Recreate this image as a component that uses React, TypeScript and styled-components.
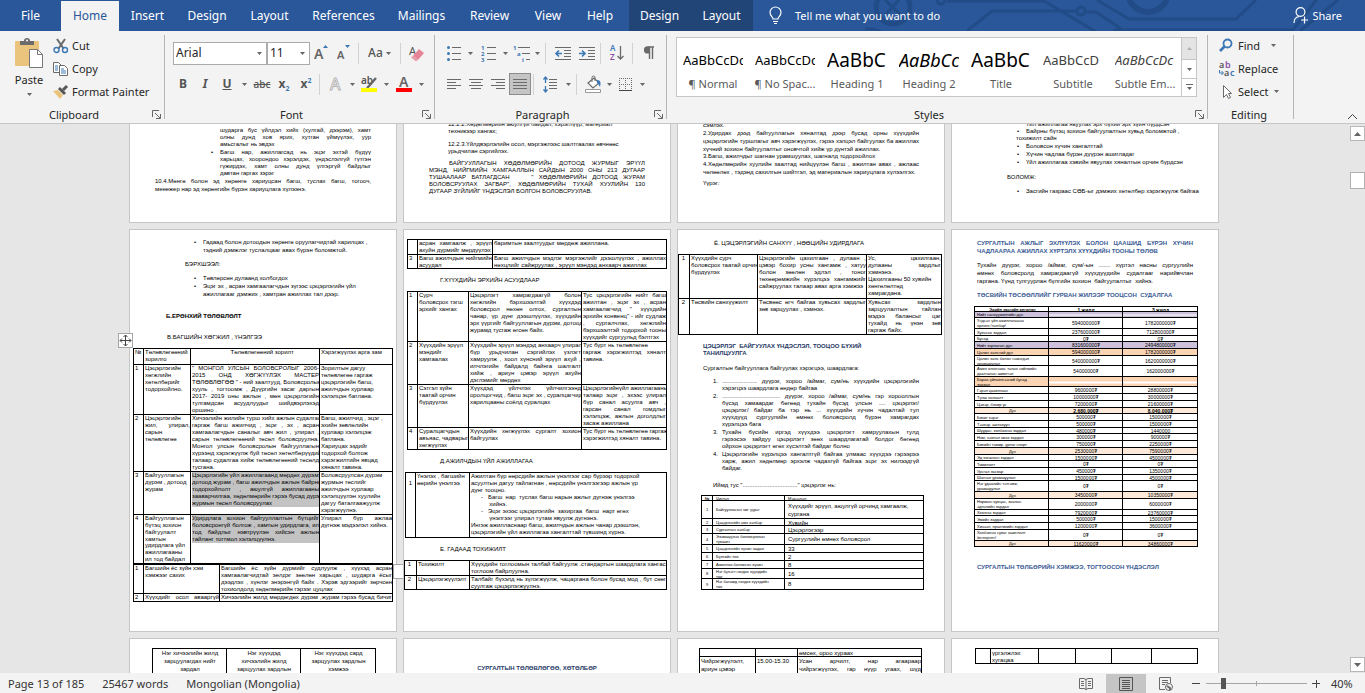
import React from 'react';
import styled, { createGlobalStyle, css } from 'styled-components';

const Global = createGlobalStyle`
  *, *::before, *::after { box-sizing: border-box; }
  body { margin: 0; overflow: hidden; }
  button, select, input { font: inherit; color: inherit; }
  button { border: 0; background: none; padding: 0; }
`;

/* ---------- shell ---------- */

const Shell = styled.div`
  display: flex;
  flex-direction: column;
  height: 100vh;
  background: #e6e6e6;
  color: #262626;
  font: 11px/16px "Noto Sans", "Open Sans", sans-serif;
`;

const TabBar = styled.nav`
  position: relative;
  display: flex;
  flex: none;
  align-items: stretch;
  height: 31px;
  background: #2a579a;
  color: #fff;
`;

const Circuit = styled.svg`
  position: absolute;
  top: 0;
  right: 0;
  width: 500px;
  height: 31px;
`;

const Tab = styled.button<{ $w: number; $active?: boolean }>`
  width: ${p => p.$w}px;
  font-size: 12px;
  ${p => p.$active && css`
    margin-top: 1px;
    background: #f3f3f3;
    color: #2a579a;
  `}
`;

const ContextTabs = styled.div`
  display: flex;
  margin-left: 3px;
  background: #224578;
`;

const TellMe = styled.button`
  position: relative;
  display: flex;
  align-items: center;
  gap: 13px;
  margin-left: 16px;
`;

const Share = styled.button`
  position: relative;
  display: flex;
  align-items: center;
  gap: 4px;
  margin-left: auto;
  padding-right: 23px;
`;

/* ---------- ribbon ---------- */

const Ribbon = styled.header`
  display: flex;
  flex: none;
  height: 93px;
  background: #f3f3f3;
  border-bottom: 1px solid #c6c6c6;
`;

const Group = styled.section<{ $w: number }>`
  position: relative;
  display: flex;
  flex-direction: column;
  width: ${p => p.$w}px;
  &::after {
    content: "";
    position: absolute;
    top: 4px;
    right: 0;
    bottom: 4px;
    width: 1px;
    background: #b5b5b5;
  }
`;

const GroupFoot = styled.footer`
  display: flex;
  align-items: center;
  height: 16px;
  padding-right: 4px;
  > span { flex: 1; text-align: center; }
  > span:not(:last-child) { padding-right: 4px; }
`;

const Rows = styled.div`
  display: flex;
  flex: 1;
  flex-direction: column;
  gap: 9px;
  padding: 11px 0 0 8px;
`;

const Row = styled.div`
  display: flex;
  align-items: center;
  height: 22px;
`;

const Tool = styled.button<{ $w: number; $on?: boolean }>`
  display: flex;
  flex: none;
  align-items: center;
  justify-content: center;
  width: ${p => p.$w}px;
  height: 22px;
  color: #555;
  ${p => p.$on && css`
    background: #c5c5c5;
    border: 1px solid #8c8c8c;
  `}
`;

const Sep = styled.i<{ $w?: number }>`
  display: flex;
  flex: none;
  justify-content: center;
  width: ${p => p.$w || 5}px;
  height: 21px;
  &::before { content: ""; width: 1px; background: #d2d2d2; }
`;

const Combo = styled.label<{ $w: number }>`
  position: relative;
  display: block;
  width: ${p => p.$w}px;
  select {
    width: 100%;
    height: 23px;
    padding: 0 2px;
    appearance: none;
    background: #fff;
    border: 1px solid #ababab;
    border-radius: 0;
    font-size: 12px;
  }
  svg { position: absolute; top: 10px; right: 5px; pointer-events: none; }
`;

const ClipBody = styled.div`
  display: flex;
  flex: 1;
  padding: 3px 0 0 8px;
`;

const PasteButton = styled.button`
  display: flex;
  flex-direction: column;
  align-items: center;
  width: 42px;
  padding-top: 4px;
  > span { margin-top: 3px; }
`;

const CommandList = styled.div<{ $x: number }>`
  display: flex;
  flex-direction: column;
  padding-left: ${p => p.$x}px;
`;

const Command = styled.button`
  display: flex;
  align-items: center;
  gap: 3px;
  height: 23px;
  white-space: nowrap;
  > svg:last-child:not(:first-child) { margin-left: 2px; }
`;

const Gallery = styled.div`
  display: flex;
  width: 521px;
  height: 60px;
  margin: 6px 0 10px 9px;
  background: #fff;
  border: 1px solid #c6c6c6;
`;

const StyleCard = styled.button<{ $size: number; $italic?: boolean; $muted?: boolean }>`
  display: flex;
  flex-direction: column;
  align-items: center;
  width: 72px;
  padding-top: 10px;
  > b {
    width: 60px;
    height: 24px;
    overflow: hidden;
    color: ${p => (p.$muted ? '#404040' : '#000')};
    font-size: ${p => p.$size}px;
    font-weight: 400;
    font-style: ${p => (p.$italic ? 'italic' : 'normal')};
    line-height: 24px;
    text-align: left;
    white-space: nowrap;
  }
  > span { color: #595959; line-height: 24px; white-space: nowrap; }
`;

const GalleryNav = styled.div`
  display: grid;
  grid-template-rows: 21px 19px 18px;
  width: 15px;
  margin-left: auto;
  border-left: 1px solid #c6c6c6;
  button { display: flex; align-items: center; justify-content: center; }
  button + button { border-top: 1px solid #c6c6c6; }
  button:first-child { background: #e4e4e4; }
`;

const Collapse = styled.button`
  display: flex;
  align-items: flex-end;
  margin: 0 7px 3px auto;
`;

/* ---------- document ---------- */

const Workspace = styled.div`
  display: flex;
  flex: 1;
  min-height: 0;
`;

const Desk = styled.main`
  flex: 1;
  padding-right: 1px;
  overflow: hidden;
`;

const PageGrid = styled.div`
  position: relative;
  display: grid;
  grid-template-columns: repeat(4, 268px);
  gap: 6px;
  justify-content: center;
  color: #000;
  font: 6px/8px "Liberation Sans", Arial, sans-serif;
`;

const Sheet = styled.article<{ $top?: number; $tail?: number }>`
  position: relative;
  height: 403px;
  padding: ${p => p.$top || 9}px 25px 0;
  background: #fff;
  border: 1px solid #c6c6c6;
  ${p => p.$tail !== undefined && css`
    display: flex;
    flex-direction: column;
    justify-content: flex-end;
    height: 99px;
    padding: 0 25px ${p.$tail}px;
    overflow: hidden;
    border-top: 0;
  `}
`;

const Para = styled.div<{ $x?: number; $gap?: number; $lh?: number; $mark?: string }>`
  position: relative;
  flex: none;
  margin-top: ${p => p.$gap || 0}px;
  padding-left: ${p => p.$x || 0}px;
  line-height: ${p => p.$lh || 8}px;
  ${p => p.$mark && css`
    &::before {
      content: "${p.$mark}";
      position: absolute;
      left: ${(p.$x || 0) - 9}px;
    }
  `}
`;

const Line = styled.span<{ $fill: boolean }>`
  display: block;
  min-height: 1px;
  white-space: nowrap;
  text-align-last: ${p => (p.$fill ? 'justify' : 'inherit')};
`;

const Section = styled.h3`
  margin: 0;
  padding-left: 11px;
  font-size: 6px;
  font-weight: 400;
  line-height: 22px;
`;

const Heading = styled.h2<{ $gap?: number; $lh?: number; $tone: string; $center?: boolean; $x?: number }>`
  margin: ${p => p.$gap || 0}px 0 0;
  padding-left: ${p => p.$x || 0}px;
  color: ${p => p.$tone};
  font-size: 6px;
  font-weight: 700;
  line-height: ${p => p.$lh || 8}px;
  text-align: ${p => (p.$center ? 'center' : 'left')};
`;

const Table = styled.table<{ $x: number; $w: number; $gap?: number }>`
  width: ${p => p.$w}px;
  margin: ${p => p.$gap || 0}px 0 0 ${p => p.$x}px;
  border-collapse: collapse;
  table-layout: fixed;
  td {
    padding: 0;
    border: 1px solid #000;
    vertical-align: top;
  }
`;

const Clip = styled.div<{ $h: number; $size?: number; $lh?: number; $mid?: boolean; $center?: boolean; $pad?: number; $bold?: boolean }>`
  display: flex;
  flex-direction: column;
  justify-content: ${p => (p.$mid ? 'center' : 'flex-start')};
  height: ${p => p.$h}px;
  padding-left: ${p => p.$pad ?? 1}px;
  overflow: hidden;
  font-size: ${p => p.$size || 6}px;
  font-weight: ${p => (p.$bold ? 700 : 400)};
  line-height: ${p => p.$lh || 7}px;
  text-align: ${p => (p.$center ? 'center' : 'left')};
`;

const Marked = styled.div`
  background: #c3c3c3;
`;

const FinanceCell = styled.td<{ $bg?: string; $stripe?: boolean }>`
  background: ${p => p.$stripe
    ? `linear-gradient(${p.$bg} 50%, #fff 50%, #fff 66%, ${p.$bg} 66%)`
    : p.$bg || '#fff'};
`;

const MoveHandle = styled.span`
  position: absolute;
  top: 103px;
  left: -12px;
  display: flex;
  width: 15px;
  height: 15px;
  background: #fff;
  border: 1px solid #a6a6a6;
`;

const ResizeHandle = styled.span`
  position: absolute;
  top: 334px;
  left: 263px;
  width: 10px;
  height: 15px;
  background: #fff;
  border: 1px solid #a6a6a6;
  border-right: 0;
`;

const ScrollTrack = styled.aside`
  display: flex;
  flex-direction: column;
  width: 16px;
  padding: 2px 0 1px 1px;
  background: #e6e6e6;
`;

const ScrollButton = styled.button<{ $push?: boolean }>`
  display: flex;
  align-items: center;
  justify-content: center;
  height: 15px;
  margin-top: ${p => (p.$push ? 'auto' : '0')};
  background: #fff;
  border: 1px solid #b8b8b8;
`;

const ScrollThumb = styled.div`
  height: 17px;
  margin-top: 31px;
  background: #fff;
  border: 1px solid #b0b0b0;
`;

/* ---------- status bar ---------- */

const Status = styled.footer`
  display: flex;
  flex: none;
  align-items: center;
  height: 20px;
  padding: 1px 12px 0 8px;
  background: #f3f3f3;
  color: #333;
  > span + span { margin-left: 18px; }
`;

const ViewModes = styled.div`
  display: flex;
  height: 20px;
  margin-left: auto;
`;

const ViewMode = styled.button<{ $on?: boolean }>`
  display: flex;
  align-items: center;
  justify-content: center;
  width: 40px;
  background: ${p => (p.$on ? '#c5c5c5' : 'transparent')};
`;

const ZoomSlider = styled.input`
  width: 101px;
  height: 14px;
  margin: 0 5px;
  appearance: none;
  background:
    linear-gradient(#a6a6a6, #a6a6a6) center / 1px 5px no-repeat,
    linear-gradient(#a6a6a6, #a6a6a6) center / 100% 1px no-repeat;
  &::-webkit-slider-thumb {
    appearance: none;
    width: 5px;
    height: 11px;
    background: #555;
    border-radius: 0;
  }
`;

const ZoomValue = styled.output`
  width: 22px;
  margin-left: 10px;
  white-space: nowrap;
`;

/* ---------- icons ---------- */

const G = '#6a6a6a';
const B = '#3b78b5';

const Svg = ({ w = 16, h = 16, children }: { w?: number; h?: number; children: React.ReactNode }) => (
  <svg width={w} height={h} viewBox={`0 0 ${w} ${h}`} fill="none" overflow="visible" aria-hidden="true">{children}</svg>
);

const Down = ({ c = '#666' }: { c?: string }) => <Svg w={5} h={3}><path d="M0 0h5L2.500 3z" fill={c} /></Svg>;
const Up = ({ c = '#666' }: { c?: string }) => <Svg w={5} h={3}><path d="M0 3h5L2.500 0z" fill={c} /></Svg>;

const Launcher = () => (
  <Svg w={9} h={9}><path d="M.5 7V.5H7M3 3l5 5M8.500 4v4.500H4" stroke="#666" /></Svg>
);

const PasteIcon = () => (
  <Svg w={28} h={31}>
    <rect y="3" width="24" height="25" rx="1" fill="#eac47c" />
    <path d="M5 3h4a3 3 0 0 1 6 0h4v4H5z" fill="#6b6b6b" /><circle cx="12" cy="2.500" r="1" fill="#fff" />
    <path d="M14.500 11.500h8l5 5v13h-13z" fill="#fff" stroke="#777" /><path d="M22.500 11.500v5h5" stroke="#777" />
  </Svg>
);
const CutIcon = () => (
  <Svg>
    <path d="M4 1l6.500 9.500M12 1L5.500 10.500" stroke={G} strokeWidth="2" />
    <circle cx="3.500" cy="12" r="2.500" stroke={B} strokeWidth="1.400" /><circle cx="12" cy="12" r="2.500" stroke={B} strokeWidth="1.400" />
  </Svg>
);
const CopyIcon = () => (
  <Svg>
    <path d="M.5 1.500h5l3 3v7h-8z" fill="#fff" stroke={G} /><path d="M2 5h3M2 7h3M2 9h3" stroke={B} />
    <path d="M6.500 4.500h5l3 3v7h-8z" fill="#fff" stroke={G} /><path d="M8 8h3M8 10h5M8 12h5" stroke={B} />
  </Svg>
);
const BrushIcon = () => (
  <Svg>
    <path d="M0 7l5-1 5 5-3 4z" fill="#eac47c" /><path d="M5 5l2-2 6 6-2 2z" fill="#555" />
    <path d="M10 6l4-4" stroke="#555" strokeWidth="3" />
  </Svg>
);
const BulbIcon = () => (
  <Svg w={13} h={18}>
    <path d="M4 12c0-2-3-3-3-6.500a5.500 5.500 0 0 1 11 0C12 9 9 10 9 12zM4 14.500h5M5 16.500h3" stroke="#fff" strokeWidth="1.200" />
  </Svg>
);
const PersonIcon = () => (
  <Svg w={15} h={17}>
    <circle cx="7.500" cy="5" r="4.400" stroke="#fff" strokeWidth="1.200" />
    <path d="M1 16c0-4 2-6 5-6.500M11.500 9.500v7M8 13h7" stroke="#fff" strokeWidth="1.200" />
  </Svg>
);

const Glyph = styled.span<{ $size: number; $bold?: boolean; $italic?: boolean; $under?: boolean; $strike?: boolean }>`
  font-size: ${p => p.$size}px;
  font-weight: ${p => (p.$bold ? 700 : 500)};
  font-style: ${p => (p.$italic ? 'italic' : 'normal')};
  text-decoration: ${p => (p.$under ? 'underline' : p.$strike ? 'line-through' : 'none')};
  line-height: 16px;
  sub, sup { color: ${B}; font-size: 7px; line-height: 0; }
`;

const sans = 'Noto Sans, sans-serif';

const SizeIcon = ({ big }: { big?: boolean }) => (
  <Svg w={16} h={18}>
    <text x="1" y={big ? 15 : 15} fontSize={big ? 14 : 11} fontFamily={sans} fontWeight="600" fill="#666">A</text>
    <path d={big ? 'M10 4h5l-2.500-3z' : 'M9 1h5l-2.500 3z'} fill={B} />
  </Svg>
);
const EraserIcon = () => (
  <Svg w={16} h={18}>
    <text x="1" y="11" fontSize="11" fontFamily={sans} fill="#555">A</text>
    <path d="M5 12l6-7 5 4-6 7z" fill="#e58497" /><path d="M3 13.500l2-2 5 4-2 2z" fill="#e9a0ae" />
  </Svg>
);
const OutlineA = () => (
  <Svg w={16} h={18}>
    <text x="3" y="15" fontSize="16" fontFamily={sans} fontWeight="500" fill="#f8f8f8" stroke="#b5b5b5" strokeWidth=".9">A</text>
  </Svg>
);
const HighlightIcon = () => (
  <Svg w={18} h={18}>
    <text x="1" y="9" fontSize="10" fontFamily={sans} fontWeight="600" fill="#555">ab</text>
    <path d="M16 3l-7 8-2 2" stroke="#666" strokeWidth="2.400" /><path d="M1 13h16v4H1z" fill="#ff0" />
  </Svg>
);
const FontColorIcon = () => (
  <Svg w={18} h={18}>
    <text x="4" y="12" fontSize="14" fontFamily={sans} fontWeight="600" fill="#666">A</text>
    <path d="M1 13h16v4H1z" fill="#f00" />
  </Svg>
);

const BulletsIcon = () => (
  <Svg w={14} h={16}>
    <path d="M5 2.500h9M5 8.500h9M5 14.500h9" stroke={G} />
    <circle cx="1.500" cy="2.500" r="1.500" fill={B} /><circle cx="1.500" cy="8.500" r="1.500" fill={B} /><circle cx="1.500" cy="14.500" r="1.500" fill={B} />
  </Svg>
);
const NumbersIcon = () => (
  <Svg w={15} h={18}>
    <path d="M6 3.500h9M6 9.500h9M6 15.500h9" stroke={G} />
    {[1, 2, 3].map(n => (
      <text key={n} x="0" y={n * 6} fontSize="6" fontFamily={sans} fontWeight="700" fill={B}>{n}</text>
    ))}
  </Svg>
);
const MultiIcon = () => (
  <Svg w={17} h={18}>
    <path d="M5 3.500h12M9 9.500h8M13 15.500h4" stroke={G} />
    <g fontSize="6" fontFamily={sans} fontWeight="700" fill={B}>
      <text x="0" y="6">1</text><text x="4" y="12">a</text><text x="9" y="18">i</text>
    </g>
  </Svg>
);
const IndentIcon = ({ out }: { out?: boolean }) => (
  <Svg w={16} h={14}>
    <path d="M0 1.500h16M9 4.500h7M9 7.500h7M9 10.500h7M0 13.500h16" stroke={G} />
    <path d={out ? 'M7 7.500H1M4 4.500l-3 3 3 3' : 'M0 7.500h6M3 4.500l3 3-3 3'} stroke={B} strokeWidth="1.600" />
  </Svg>
);
const SortIcon = () => (
  <Svg w={14} h={18}>
    <g fontSize="8" fontFamily={sans} fontWeight="600">
      <text x="0" y="7" fill={B}>A</text><text x="0" y="16" fill="#8a4fa5">Z</text>
    </g>
    <path d="M10.500 2v13M7.500 12l3 3 3-3" stroke={G} strokeWidth="1.300" />
  </Svg>
);
const PilcrowIcon = () => (
  <Svg w={11} h={14}>
    <path d="M11 1H5.500M6.500 1v12M9.500 1v12" stroke={G} strokeWidth="1.400" /><path d="M6.500.3v7.200H4.500a3.600 3.600 0 0 1 0-7.200z" fill={G} />
  </Svg>
);
const AlignIcon = ({ rows }: { rows: string }) => <Svg w={14} h={13}><path d={rows} stroke={G} /></Svg>;
const SpacingIcon = () => (
  <Svg w={14} h={17}>
    <path d="M6 3.500h8M6 6.500h8M6 9.500h8M6 12.500h8" stroke={G} />
    <path d="M2.500 1v6M.5 3.500l2-2.500 2 2.500M2.500 10v6M.5 13.500l2 2.500 2-2.500" stroke={B} strokeWidth="1.300" />
  </Svg>
);
const BucketIcon = () => (
  <Svg w={17} h={17}>
    <path d="M3 7l6-5 5 5-6 5z" fill="#fff" stroke={G} strokeWidth="1.200" /><path d="M7 6V1.500a1.500 1.500 0 0 1 3 0V5" stroke={G} />
    <path d="M12 4c4 0 4 3 3 7-1-1-1-3-3-4z" fill={B} /><path d="M.5 13.500h15v3H.5z" fill="#fff" stroke="#999" />
  </Svg>
);
const BordersIcon = () => (
  <Svg w={13} h={13}>
    <path d="M0 .5h13M0 6.500h13M.5 0v12M6.500 0v12M12.500 0v12" stroke={G} strokeDasharray="1 1" /><path d="M0 12.500h13" stroke="#444" />
  </Svg>
);
const FindIcon = () => (
  <Svg w={16} h={15}><circle cx="8.500" cy="5.500" r="4" stroke={B} strokeWidth="1.800" /><path d="M5.500 8.500L1 13" stroke={B} strokeWidth="2.600" /></Svg>
);
const ReplaceIcon = () => (
  <Svg w={16} h={18}>
    <g fontSize="9" fontFamily={sans} fontWeight="600">
      <text x="0" y="8" fill="#555">a</text><text x="6" y="8" fill="#8a4fa5">b</text>
      <text x="5" y="16" fill="#555">a</text><text x="11" y="16" fill={B}>c</text>
    </g>
    <path d="M.5 10v3H4M2.500 11l2 2-2 2" stroke={B} />
  </Svg>
);
const PointerIcon = () => (
  <Svg w={16} h={16}><path d="M4.500 1.500v12l3-3 2 4 2-1-2-4h3z" fill="#fff" stroke={G} /></Svg>
);

/* ---------- text helpers ---------- */

// Lines are separated by "|"; a leading "=" stretches the line to the full measure.
const lines = (text: string) => text.split('|').map((t, i) => (
  <Line key={i} $fill={t[0] === '='}>{t[0] === '=' ? t.slice(1) : t}</Line>
));

type TextRow = { h: number; cells: string[]; mark?: number; centered?: number };

const TextTable = ({ x, cols, rows, gap, center, mid, lh }: {
  x: number; cols: number[]; rows: TextRow[]; gap?: number; center?: boolean; mid?: boolean; lh?: number;
}) => (
  <Table $x={x} $w={cols.reduce((a, b) => a + b, 0)} $gap={gap}>
    <colgroup>{cols.map((w, i) => <col key={i} width={w} />)}</colgroup>
    <tbody>
      {rows.map((r, i) => (
        <tr key={i}>
          {r.cells.map((c, j) => (
            <td key={j}>
              <Clip $h={r.h - 1} $center={center || r.centered === j} $mid={mid} $lh={lh}>
                {r.mark === j ? <Marked>{lines(c)}</Marked> : lines(c)}
              </Clip>
            </td>
          ))}
        </tr>
      ))}
    </tbody>
  </Table>
);

/* ---------- document data ---------- */

const planRows: TextRow[] = [
  { h: 16, centered: 2, cells: ['№', 'Төлөвлөгөөний|зорилго', '\u00a0\u00a0\u00a0\u00a0\u00a0\u00a0\u00a0\u00a0Төлөвлөгөөний зорилт', 'Хэрэгжүүлэх арга зам'] },
  { h: 50, cells: ['1', 'Цэцэрлэгийн|хөгжлийн|хөтөлбөрийг|тодорхойлно.', '=" МОНГОЛ УЛСЫН БОЛОВСРОЛЫГ 2006-|=2015 ОНД ХӨГЖҮҮЛЭХ МАСТЕР|=ТӨЛӨВЛӨГӨӨ " - ний заалтууд, Боловсролын|=хууль , тогтоомж , Дүүргийн засаг даргын|=2017- 2019 оны ажлын , мөн цэцэрлэгийн|=тулгамдсан асуудлуудыг шийдвэрлэхэд|оршино .', 'Зорилтын дагуу|төлөвлөгөө гаргаж|цэцэрлэгийн багш,|ажилчдын хурлаар|хэлэлцэн батлана.'] },
  { h: 57, cells: ['2', 'Цэцэрлэгийн|=жил, улирал,|сарын|төлөвлөгөө', '=Хичээлийн жилийн турш хийх ажлын судалгаа|=гаргаж багш ажилчид , эцэг , эх , асран|=хамгаалагчдын саналыг авч жил , улирал ,|=сарын төлөвлөгөөний төсөл боловсруулна.|=Монгол улсын боловсролын байгууллагын|=хүрээнд хэрэгжүүлж буй төсөл хөтөлбөрүүдийн|=талаар судалгаа хийж төлөвлөгөөний төсөлд|тусгана.', 'Багш, ажилчид , эцэг ,|эхийн зөвлөлийн|хурлаар хэлэлцэж|батлана.|Хариуцах эздийг|тодорхой болгож|хэрэгжилтийн явцад|хяналт тавина.'] },
  { h: 43, mark: 2, cells: ['3', 'Байгууллагын|дүрэм , дотоод|журам', '=Цэцэрлэгийн үйл ажиллагаанд мөрдөх дүрэм ,|=дотоод журам , багш ажилчдын ажлын байрны|=тодорхойлолт , аюулгүй ажиллагааны|=зааварчилгаа, хөдөлмөрийн гэрээ бусад дүрэм|журмын төсөл боловсруулах', 'Боловсруулсан дүрэм|журмын төслийг|ажилчдын хурлаар|хэлэлцүүлэн хуулийн|дагуу баталгаажуулж|хэрэгжүүлнэ.'] },
  { h: 49, mark: 2, cells: ['4', 'Байгууллагын|бүтэц зохион|байгуулалт|хамтын|удирдлага үйл|ажиллагааны|ил тод байдал', '=Удирдлага зохион байгууллалтын бүтцийг|=боловсронгүй болгож , хамтын удирдлага, ил|=тод байдлыг нэвтрүүлэн хийсэн ажлын|тайланг тогтмол хэлэлцүүлнэ.', '=Улирал бүр ажлаа|дүгнэж мэдээлэл хийнэ.'] },
];

const ethicsRows: TextRow[] = [
  { h: 29, cells: ['1', 'Багшийн ёс зүйн хэм|хэмжээг сахих', '=Багшийн ёс зүйн дүрмийг судлуулж , хүүхэд асран|=хамгаалагчидтай эелдэг зөөлөн харьцах , шударга ёсыг|=дээдлэх , хүнлэг энэрэнгүй байх . Хэрэв эдгээрийг зөрчсөн|тохиолдолд хөдөлмөрийн гэрээг цуцлах'] },
  { h: 8, cells: ['2', '=Хүүхдийг осол авааргүй', '=Хичээлийн жилд мөрдөгдөх дүрэм ,журам гэрээ бусад бичиг'] },
];

const ethicsTail: TextRow[] = [
  { h: 15, cells: ['', '=асран хамгаалж , эрүүл|ахуйн дүрмийг мөрдүүлэх', 'баримтын заалтуудыг мөрдөж ажиллана.'] },
  { h: 14, cells: ['3', '=Багш ажилчдын нийгмийн|асуудал', '=Багш ажилчдын мэдлэг мэргэжлийг дээшлүүлэх , ажиллах|нөхцлийг сайжруулах , эрүүл мэндэд анхаарч ажиллах'] },
];

const rightsRows: TextRow[] = [
  { h: 50, cells: ['1', 'Сурч|боловсрох тэгш|эрхийг хангах', '=Цэцэрлэгт хамрагдаагүй болон|=хөгжлийн бэрхшээлтэй хүүхдэд|=боловсрол нөхөн олгох, сургалтын|=чанар, үр дүнг дээшлүүлэх, хүүхдийн|=эрх үүргийг байгууллагын дүрэм, дотоод|журамд тусгаж өгсөн байх.', '=Тус цэцэрлэгийн нийт багш|=ажилтан , эцэг эх , асран|=хамгаалагчид " хүүхдийн|=эрхийн конвенц" - ийг судлаж|=, сурталчлах, хөгжлийн|=бэрхшээлтэй тодорхой тооны|хүүхдийг сургуульд бэлтгэх'] },
  { h: 43, cells: ['2', 'Хүүхдийн эрүүл|мэндийг|хамгаалах', '=Хүүхдийн эрүүл мэндэд анхаарч улирал|=бүр урьдчилан сэргийлэх үзлэгт|=хамруулж , хоол хүнсний эрүүл ахуй ,|=илчлэгийн байдалд байнга шалгалт|=хийж , ариун цэвэр эрүүл ахуйн|дэглэмийг мөрдөх', 'Тус  бүрт нь төлөвлөгөө|=гаргаж хэрэгжилтэд хяналт|тавина.'] },
  { h: 43, cells: ['3', 'Сэтгэл зүйн|таатай орчин|бүрдүүлэх', '=Хүүхдэд үйлчлэх үйлчилгээнд|=оролцогчид , багш эцэг эх , суралцагчид|харилцааны соёлд суралцах', '=Цэцэрлэгийнүйл ажиллагааны|=талаар эцэг , эхээс улирал|=бүр санал асуулга авч ,|=гарсан санал гомдлыг|=хэлэлцэж, ажлын доголдлыг|засаж ажиллана'] },
  { h: 22, cells: ['4', 'Суралцагчдын|авъяас, чадварыг|хөгжүүлэх', '=Хүүхдийн хөгжүүлэх сургалт зохион|байгуулах', '=Тус бүрт нь төлөвлөгөө гаргаж|хэрэгжилтэд хяналт тавина.'] },
];

const staffRows: TextRow[] = [
  { h: 65, cells: ['\u00a0|\u00a01', 'Үнэлэх , багшийн|өөрийн үнэлгээ', 'Ажилтан бүр өөрсдийн ажлын үнэлгээг сар бүрээр тодорхой|асуултын дагуу тайлагнан , өөрсдийн үнэлгээгээр ажлын үр|дүнг тооцно.|\u00a0\u00a0\u00a0\u00a0\u00a0\u00a0-\u00a0\u00a0 Багш\u00a0 нар\u00a0 туслах багш нарын ажлыг дүгнэж үнэлгээ|\u00a0\u00a0\u00a0\u00a0\u00a0\u00a0\u00a0\u00a0\u00a0\u00a0\u00a0хийнэ.|\u00a0\u00a0\u00a0\u00a0\u00a0\u00a0-\u00a0\u00a0 Эцэг эхээс цэцэрлэгийн\u00a0 захиргаа\u00a0 багш\u00a0 нарт өгөх|\u00a0\u00a0\u00a0\u00a0\u00a0\u00a0\u00a0\u00a0\u00a0\u00a0\u00a0үнэлгээг улирал тутам явуулж дүгнэнэ.|Ингэж ажилласнаар багш, ажилчдын ажлын чанар дээшлэн,|цэцэрлэгийн үйл ажиллагаа хангалттай түвшинд хүрнэ.'] },
];

const yardRows: TextRow[] = [
  { h: 15, cells: ['\u00a01', 'Тохижилт', '=Хүүхдийн тоглоомын талбай байгуулж .стандартын шаардлага хангасан|тоглоом байрлуулна.'] },
  { h: 14, cells: ['\u00a02', 'Цэцэрлэгжүүлэлт', '=Талбайг бүхэлд нь зүлэгжүүлж, чацаргана болон бусад мод , бут сөөг|суулгаж цэцэрлэгжүүлнэ.'] },
];

const fundRows: TextRow[] = [
  { h: 44, cells: ['\u00a01', 'Хүүхдийн сурч|боловсрох таатай орчин|бүрдүүлэх', '=Цэцэрлэгийн цахилгаан , дулаан ,|=цэвэр бохир усны хангамж , хатуу|=болон зөөлөн эдлэл , тоног|=төхөөрөмжийн хүрэлцээ хангамжийг|сайжруулах талаар авах арга хэмжээ', '=Ус, цахилгаан,|=дулааны зардлыг|хэмнэнэ.|Цахилгааны 50 хувийн|хөнгөлөлтөд|хамрагдана.'] },
  { h: 36, cells: ['\u00a02', 'Төсвийн санхүүжилт', '=Төсвөөс өгч байгаа хувьсах зардлыг|зөв зарцуулах , хэмнэх.', '=Хувьсах зардлын|=зарцуулалтын тайлан|=мэдээ балансыг цаг|=тухайд нь үнэн зөв|гаргаж байх.'] },
];

const orgRows: [number, string, string, string][] = [
  [5, '№', 'Чиглэл', 'Мэдээлэл'],
  [18, '1', 'Байгууллагын чиг үүрэг', 'Хүүхдийг эрүүл, аюулгүй орчинд хамгаалж,|сургана'],
  [7, '2', 'Цэцэрлэгийн өмч хэлбэр', 'Хувийн'],
  [8, '3', 'Сургалтын хэлбэр', 'Цэцэрлэгээр'],
  [11, '4', 'Эзэмшүүлэх боловсролын|түвшин', 'Сургуулийн өмнөх боловсрол'],
  [8, '5', 'Цэцэрлэгийн хүчин чадал', '33'],
  [8, '6', 'Бүлгийн тоо', '2'],
  [8, '7', 'Ажиллах боловсон хүчин', '8'],
  [10, '8', 'Нэг бүлэгт ногдох хүүхдийн|тоо', '16'],
  [11, '9', 'Нэг багшид ногдох хүүхдийн|тоо', '8'],
];

const P = '#ccc0da';
const O = '#fbd4b4';
const L = '#fde9d9';

type Finance = { h: number; name: string; a?: string; b?: string; bg?: string; sum?: boolean; bold?: boolean; stripe?: boolean };

const finance: Finance[] = [
  { h: 5, name: 'Эдийн засгийн ангилал', a: '1 жилд', b: '3 жилд', sum: true, bold: true },
  { h: 6, name: 'Нийт санхүүжилтийн дүн', bg: P, stripe: true },
  { h: 11, name: 'Үндсэн үйл ажиллагааны|орлого /төлбөр/', a: '594000000₮', b: '1782000000₮' },
  { h: 7, name: 'Хувьсах зардал', a: '237600000₮', b: '712800000₮' },
  { h: 6, name: 'Бусад', a: '0₮', b: '0₮' },
  { h: 7, name: 'Нийт зарлагын дүн', a: '831600000₮', b: '2494800000₮', bg: P },
  { h: 7, name: 'Цалин хөлсний дүн', a: '594000000₮', b: '1782000000₮', bg: O },
  { h: 10, name: 'Цалин хөлс болон нэмэгдэл|урамшуулал', a: '540000000₮', b: '1620000000₮' },
  { h: 11, name: 'Ажил олгогчоос төлөх нийгмийн|даатгалын шимтгэл', a: '54000000₮', b: '162000000₮' },
  { h: 10, name: 'Бараа үйлчилгээний бусад|зардал', bg: O, stripe: true },
  { h: 7, name: 'Гэрэл цахилгаан', a: '9600000₮', b: '28800000₮' },
  { h: 7, name: 'Түлш халаалт', a: '10000000₮', b: '30000000₮' },
  { h: 7, name: 'Цэвэр, бохир ус', a: '7200000₮', b: '21600000₮' },
  { h: 6, name: 'Дүн', a: '2,680,000₮', b: '8,040,000₮', bg: L, sum: true, bold: true },
  { h: 7, name: 'Бичиг хэрэг', a: '500000₮', b: '1500000₮' },
  { h: 7, name: 'Тээвэр, шатахуун', a: '500000₮', b: '1500000₮' },
  { h: 6, name: 'Шуудан, холбооны зардал', a: '480000₮', b: '1440000' },
  { h: 7, name: 'Ном, хэвлэл авах зардал', a: '300000₮', b: '900000₮' },
  { h: 7, name: 'Биеийн тамир, урлаг спорт', a: '750000₮', b: '2250000₮' },
  { h: 7, name: 'Дүн', a: '2530000₮', b: '7590000₮', bg: L, sum: true },
  { h: 6, name: 'Эд хогшлын зардал', a: '1500000₮', b: '4500000₮' },
  { h: 7, name: 'Томилолт', a: '0₮', b: '0₮' },
  { h: 7, name: 'Урсгал засвар', a: '450000₮', b: '1350000₮' },
  { h: 6, name: 'Шагнал урамшуулал', a: '1500000₮', b: '4500000₮' },
  { h: 11, name: 'Нэг удаагийн тэтгэмж,|урамшуулал', a: '0₮', b: '0₮' },
  { h: 7, name: 'Дүн', a: '3450000₮', b: '10350000₮', bg: L, sum: true },
  { h: 11, name: 'Нормын хувцас, зөөлөн|эдлэлийн зардал', a: '2000000₮', b: '6000000₮' },
  { h: 6, name: 'Хоолны зардал', a: '7920000₮', b: '23760000₮' },
  { h: 7, name: 'Эмийн зардал', a: '500000₮', b: '1500000₮' },
  { h: 7, name: 'Хичээл, практикийн зардал', a: '1200000₮', b: '3600000₮' },
  { h: 11, name: 'Холбооны суваг ашиглалт|/интернет/', a: '0₮', b: '0₮' },
  { h: 6, name: 'Дүн', a: '11620000₮', b: '34860000₮', bg: L, sum: true },
];

const tabs: [string, number][] = [
  ['File', 61], ['Home', 58], ['Insert', 57], ['Design', 62], ['Layout', 63], ['References', 85],
  ['Mailings', 71], ['Review', 65], ['View', 52], ['Help', 52],
];

const styleCards = [
  { name: '¶ Normal', sample: 'AaBbCcDc', size: 13 },
  { name: '¶ No Spac...', sample: 'AaBbCcDc', size: 13 },
  { name: 'Heading 1', sample: 'AaBbC', size: 19 },
  { name: 'Heading 2', sample: 'AaBbCc', size: 18, italic: true },
  { name: 'Title', sample: 'AaBbC', size: 19 },
  { name: 'Subtitle', sample: 'AaBbCcD', size: 13, muted: true },
  { name: 'Subtle Em...', sample: 'AaBbCcDc', size: 13, italic: true, muted: true },
];

const NAVY = '#1f3864';
const BLUE = '#3a5a94';

/* ---------- parts ---------- */

const Foot = ({ label, launcher = true }: { label: string; launcher?: boolean }) => (
  <GroupFoot><span>{label}</span>{launcher && <button aria-label={`${label} settings`}><Launcher /></button>}</GroupFoot>
);

const Header = () => (
  <TabBar>
    <Circuit viewBox="0 0 500 31" fill="none" stroke="#224c88" strokeWidth="3">
      <circle cx="28" cy="7" r="17" strokeWidth="5" /><path d="M20 0l16 15M20 15L34 0M0 29h8l8 3" />
      <path d="M102 31l25-20h84M221 12h10l30 20M82 1h97l54 32M232 0l32 19h107l20-19M248 30h180l24-31M435 31l38-31" />
      <circle cx="216" cy="11" r="4" /><circle cx="76" cy="0" r="4" /><circle cx="283" cy="-8" r="20" strokeWidth="6" />
    </Circuit>
    {tabs.map(([name, w]) => <Tab key={name} $w={w} $active={name === 'Home'}>{name}</Tab>)}
    <ContextTabs><Tab $w={61}>Design</Tab><Tab $w={63}>Layout</Tab></ContextTabs>
    <TellMe><BulbIcon />Tell me what you want to do</TellMe>
    <Share><PersonIcon />Share</Share>
  </TabBar>
);

const Drop = ({ w }: { w: number }) => <Tool $w={w} aria-label="More options"><Down /></Tool>;

const RibbonBar = () => (
  <Ribbon>
    <Group $w={165}>
      <ClipBody>
        <PasteButton><PasteIcon /><span>Paste</span><Svg w={7} h={12}><path d="M1 5h5L3.500 8z" fill="#666" /></Svg></PasteButton>
        <CommandList $x={3}>
          <Command><CutIcon />Cut</Command>
          <Command><CopyIcon />Copy</Command>
          <Command><BrushIcon />Format Painter</Command>
        </CommandList>
      </ClipBody>
      <Foot label="Clipboard" />
    </Group>

    <Group $w={270}>
      <Rows>
        <Row>
          <Combo $w={94}><select aria-label="Font"><option>Arial</option></select><Down /></Combo>
          <Combo $w={43}><select aria-label="Font size"><option>11</option></select><Down /></Combo>
          <Tool $w={22} aria-label="Grow font"><SizeIcon big /></Tool>
          <Tool $w={24} aria-label="Shrink font"><SizeIcon /></Tool>
          <Sep />
          <Tool $w={37} aria-label="Change case"><Glyph $size={12}>Aa&nbsp;</Glyph><Down /></Tool>
          <Sep />
          <Tool $w={25} aria-label="Clear formatting"><EraserIcon /></Tool>
        </Row>
        <Row>
          <Tool $w={20}><Glyph $size={12} $bold>B</Glyph></Tool>
          <Tool $w={24}><Glyph $size={12} $bold $italic>I</Glyph></Tool>
          <Tool $w={20}><Glyph $size={12} $bold $under>U</Glyph></Tool>
          <Drop w={14} />
          <Tool $w={22}><Glyph $size={10} $strike>abc</Glyph></Tool>
          <Tool $w={22}><Glyph $size={12} $bold>x<sub>2</sub></Glyph></Tool>
          <Tool $w={22}><Glyph $size={12} $bold>x<sup>2</sup></Glyph></Tool>
          <Sep />
          <Tool $w={26} aria-label="Text effects"><OutlineA /></Tool><Drop w={8} />
          <Tool $w={26} aria-label="Highlight"><HighlightIcon /></Tool><Drop w={9} />
          <Tool $w={26} aria-label="Font color"><FontColorIcon /></Tool><Drop w={8} />
        </Row>
      </Rows>
      <Foot label="Font" />
    </Group>

    <Group $w={232}>
      <Rows>
        <Row>
          <Tool $w={22} aria-label="Bullets"><BulletsIcon /></Tool><Drop w={10} />
          <Tool $w={26} aria-label="Numbering"><NumbersIcon /></Tool><Drop w={8} />
          <Tool $w={24} aria-label="Multilevel list"><MultiIcon /></Tool><Drop w={8} />
          <Sep $w={9} />
          <Tool $w={26} aria-label="Decrease indent"><IndentIcon out /></Tool>
          <Tool $w={22} aria-label="Increase indent"><IndentIcon /></Tool>
          <Sep />
          <Tool $w={27} aria-label="Sort"><SortIcon /></Tool>
          <Sep />
          <Tool $w={26} aria-label="Show marks"><PilcrowIcon /></Tool>
        </Row>
        <Row>
          <Tool $w={22} aria-label="Align left"><AlignIcon rows="M0 1.500h14M0 4.500h9M0 7.500h14M0 10.500h9" /></Tool>
          <Tool $w={22} aria-label="Center"><AlignIcon rows="M0 1.500h14M2 4.500h10M0 7.500h14M2 10.500h10" /></Tool>
          <Tool $w={22} aria-label="Align right"><AlignIcon rows="M0 1.500h14M5 4.500h9M0 7.500h14M5 10.500h9" /></Tool>
          <Tool $w={22} $on aria-label="Justify"><AlignIcon rows="M0 1.500h14M0 4.500h14M0 7.500h14M0 10.500h14" /></Tool>
          <Sep />
          <Tool $w={28} aria-label="Line spacing"><SpacingIcon /></Tool><Drop w={8} />
          <Sep $w={9} />
          <Tool $w={24} aria-label="Shading"><BucketIcon /></Tool><Drop w={8} />
          <Tool $w={24} aria-label="Borders"><BordersIcon /></Tool><Drop w={10} />
        </Row>
      </Rows>
      <Foot label="Paragraph" />
    </Group>

    <Group $w={541}>
      <Gallery>
        {styleCards.map(s => (
          <StyleCard key={s.name} $size={s.size} $italic={s.italic} $muted={s.muted}><b>{s.sample}</b><span>{s.name}</span></StyleCard>
        ))}
        <GalleryNav>
          <button aria-label="Previous styles"><Up c="#b0b0b0" /></button>
          <button aria-label="Next styles"><Down /></button>
          <button aria-label="All styles"><Svg w={7} h={7}><path d="M0 .5h7" stroke="#666" /><path d="M1 3h5L3.500 6z" fill="#666" /></Svg></button>
        </GalleryNav>
      </Gallery>
      <Foot label="Styles" />
    </Group>

    <Group $w={86}>
      <ClipBody>
        <CommandList $x={3}>
          <Command><FindIcon />Find&nbsp;&nbsp;<Down /></Command>
          <Command><ReplaceIcon />Replace</Command>
          <Command><PointerIcon />Select<Down /></Command>
        </CommandList>
      </ClipBody>
      <Foot label="Editing" launcher={false} />
    </Group>
    <Collapse aria-label="Collapse ribbon"><Svg w={11} h={7}><path d="M1 6l4.500-4.500L10 6" stroke="#444" /></Svg></Collapse>
  </Ribbon>
);

const OrgTable = () => (
  <Table $x={-2} $w={222} $gap={6}>
    <colgroup><col width={11} /><col width={72} /><col width={139} /></colgroup>
    <tbody>
      {orgRows.map(([h, n, name, value], i) => (
        <tr key={i}>
          <td><Clip $h={h - 1} $size={4} $lh={5} $mid $center $pad={0} $bold={i === 0}>{n}</Clip></td>
          <td><Clip $h={h - 1} $size={4} $lh={5} $mid $pad={3}>{lines(name)}</Clip></td>
          <td><Clip $h={h - 1} $size={i ? 6 : 4} $lh={i ? 8 : 5} $mid $pad={3}>{lines(value)}</Clip></td>
        </tr>
      ))}
    </tbody>
  </Table>
);

const FinanceTable = () => (
  <Table $x={-3} $w={223} $gap={7}>
    <colgroup><col width={74} /><col width={74} /><col width={75} /></colgroup>
    <tbody>
      {finance.map((r, i) => (
        <tr key={i}>
          <FinanceCell $bg={r.bg}><Clip $h={r.h - 1} $size={4} $lh={5} $mid $pad={2} $center={r.sum} $bold={i === 0}>{lines(r.name)}</Clip></FinanceCell>
          {[r.a, r.b].map((v, j) => (
            <FinanceCell key={j} $bg={r.bg} $stripe={r.stripe}>
              <Clip $h={r.h - 1} $size={5} $lh={6} $mid $center $bold={r.bold}>{lines(v || '')}</Clip>
            </FinanceCell>
          ))}
        </tr>
      ))}
    </tbody>
  </Table>
);

const Pages = () => (
  <PageGrid>
    <Sheet $tail={29}>
      <Para $x={65} $lh={7}>{lines('=шударга бус үйлдэл хийх (хулгай, дээрэм), хамт|=олны дунд хов ярих, хутган үймүүлэх, уур|амьсгалыг нь эвдэх')}</Para>
      <Para $x={65} $lh={7} $gap={1} $mark="•">{lines('=Багш нар, ажиллагсад нь эцэг эхтэй бүдүү|=харьцах, хоорондоо хэрэлдэх, үндэслэлгүй гүтгэн|=гүжирдэх, хамт олны дунд үлгэргүй байдлыг|давтан гаргах зэрэг')}</Para>
      <Para>{lines('=10.4.Мөнгө болон эд хөрөнгө хариуцсан багш, туслах багш, тогооч,|менежер нар эд хөрөнгийн бүрэн хариуцлага хүлээнэ.')}</Para>
    </Sheet>
    <Sheet $tail={27}>
      <Para $x={19} $lh={7}>{lines('12.2.2.Хөдөлмөрийн аюулгүй байдал, хэрэглүүр, материал|техникээр хангах;')}</Para>
      <Para $x={19} $lh={7} $gap={6}>{lines('12.2.3.Үйлдвэрлэлийн осол, мэргэжлээс шалтгаалах өвчнөөс|урьдчилан сэргийлэх.')}</Para>
      <Para $x={20} $lh={7} $gap={5}>{lines('=БАЙГУУЛЛАГЫН ХӨДӨЛМӨРИЙН ДОТООД ЖУРМЫГ ЭРҮҮЛ')}</Para>
      <Para $lh={7}>{lines('=МЭНД, НИЙГМИЙН ХАМГААЛЛЫН САЙДЫН 2000 ОНЫ 213 ДУГААР|=ТУШААЛААР БАТЛАГДСАН \u00a0 \u00a0" ХӨДӨЛМӨРИЙН ДОТООД ЖУРАМ|=БОЛОВСРУУЛАХ ЗАГВАР", ХӨДӨЛМӨРИЙН ТУХАЙ ХУУЛИЙН 130|ДУГААР ЗҮЙЛИЙГ ҮНДЭСЛЭЛ БОЛГОН БОЛОВСРУУЛАВ.')}</Para>
    </Sheet>
    <Sheet $tail={35}>
      <Para>{lines('сэмлэх.|=2.Удирдах дээд байгууллагын хяналтад дээр бусад орны хүүхдийн|=цэцэрлэгийн туршлагыг авч хэрэгжүүлэх, гэрээ хэлцэл байгуулах ба ажиллах|хүчний зохион байгуулалтыг оновчтой хийж үр дүнтэй ажиллах.')}</Para>
      <Para $lh={7}>{lines('3.Багш, ажилчдыг шагнан урамшуулах, шагналд тодорхойлох')}</Para>
      <Para>{lines('=4.Хөдөлмөрийн хуулийн заалтад нийцүүлэн багш , ажилтан авах , ажлаас|чөлөөлөх , тэдэнд сахилгын шийтгэл, эд материалын хариуцлага хүлээлгэх.')}</Para>
      <Para $gap={3}>Үүрэг:</Para>
    </Sheet>
    <Sheet $tail={27}>
      <Para $x={49}>{lines('Үйл ажиллагаа явуулах эрх бүхий эрх зүйн бүрдсэн')}</Para>
      <Para $x={49} $lh={7} $mark="•">{lines('Байрны бүтэц зохион байгуулалтын хувьд боломжтой ,')}</Para>
      <Para $x={39} $lh={7}>{lines('тохижилт сайн')}</Para>
      <Para $x={49} $mark="•">{lines('Боловсон хүчин хангалттай')}</Para>
      <Para $x={49} $mark="•">{lines('Хүчин чадлаа бүрэн дүүрэн ашигладаг')}</Para>
      <Para $x={49} $mark="•">{lines('Үйл ажиллагаа хэвийн явуулах хяналтын орчин бүрдсэн')}</Para>
      <Para $x={30} $gap={7}>БОЛОМЖ:</Para>
      <Para $x={49} $gap={6} $mark="•">{lines('Засгийн газраас СӨБ-ыг дэмжих хөтөлбөр хэрэгжүүлж байгаа')}</Para>
    </Sheet>

    <Sheet $top={8}>
      <Para $x={48} $mark="•">{lines('Гадаад болон дотоодын хөрөнгө оруулагчидтай харилцах ,|тэдний дэмжлэг туслалцааг авах бүрэн боломжтой.')}</Para>
      <Para $x={30} $gap={6}>БЭРХШЭЭЛ:</Para>
      <Para $x={48} $gap={6} $mark="•">{lines('Төвлөрсөн дулаанд холбогдох')}</Para>
      <Para $x={48} $mark="•">{lines('Эцэг эх , асран хамгаалагчдын зүгээс цэцэрлэгийн үйл|ажиллагааг дэмжих , хамтран ажиллах тал дээр.')}</Para>
      <Heading $tone="#000" $gap={14} $x={11}>Б.ЕРӨНХИЙ ТӨЛӨВЛӨЛТ</Heading>
      <Para $gap={6} $x={1}><Section>В.БАГШИЙН ХӨГЖИЛ , ҮНЭЛГЭЭ</Section></Para>
      <TextTable x={-22} cols={[10, 47, 129, 73]} rows={planRows} />
      <TextTable x={-22} cols={[10, 76, 173]} rows={ethicsRows} />
      <MoveHandle><Svg w={13} h={13}><path d="M6.500 1v11M1 6.500h11M4.500 3l2-2 2 2M4.500 10l2 2 2-2M3 4.500l-2 2 2 2M10 4.500l2 2-2 2" stroke="#444" /></Svg></MoveHandle>
      <ResizeHandle />
    </Sheet>
    <Sheet>
      <TextTable x={-22} cols={[10, 75, 174]} rows={ethicsTail} />
      <Section>Г.ХҮҮХДИЙН ЭРХИЙН АСУУДЛААР</Section>
      <TextTable x={-22} cols={[10, 51, 113, 85]} rows={rightsRows} />
      <Section>Д.АЖИЛЧДЫН ҮЙЛ АЖИЛЛАГАА</Section>
      <TextTable x={-24} cols={[10, 54, 197]} rows={staffRows} />
      <Section>Е. ГАДААД ТОХИЖИЛТ</Section>
      <TextTable x={-25} cols={[12, 53, 197]} rows={yardRows} />
    </Sheet>
    <Sheet $top={2}>
      <Section>Ё. ЦЭЦЭРЛЭГИЙН САНХҮҮ , НӨӨЦИЙН УДИРДЛАГА</Section>
      <TextTable x={-25} cols={[11, 68, 109, 75]} rows={fundRows} />
      <Heading $tone={NAVY} $gap={8} $lh={7}>{lines('ЦЭЦЭРЛЭГ \u00a0БАЙГУУЛАХ ҮНДЭСЛЭЛ, ТООЦОО БҮХИЙ|ТАНИЛЦУУЛГА')}</Heading>
      <Para $gap={7}>Сургалтын байгууллага байгуулах хэрэгцээ, шаардлага:</Para>
      <Para $x={19} $lh={7} $gap={6} $mark="1.">{lines('=..................... дүүрэг, хороо /аймаг, сум/нь хүүхдийн цэцэрлэгийн|хэрэгцээ шаардлага өндөр байгаа')}</Para>
      <Para $x={19} $lh={7} $gap={1} $mark="2.">{lines('=................................... дүүрэг, хороо /аймаг, сум/нь гэр хорооллын|=бүсэд хамаардаг бөгөөд тухайн бүсэд улсын .... цэцэрлэг/|=цэцэрлэг/ байдаг ба тэр нь ... хүүхдийн хүчин чадалтай тул|=хүүхдүүд сургуулийн өмнөх боловсролд бүрэн хамрагдах|хүрэлцээ бага')}</Para>
      <Para $x={19} $lh={7} $gap={1} $mark="3.">{lines('=Тухайн бүсийн иргэд хүүхдээ цэцэрлэгт хамруулахын тулд|=гэрээсээ зайдуу цэцэрлэгт зөөх шаардлагатай болдог бөгөөд|ойрхон цэцэрлэгт өгөх хүсэлтэй байдаг болно')}</Para>
      <Para $x={19} $lh={7} $gap={1} $mark="4.">{lines('=Цэцэрлэгийн хүрэлцээ хангалтгүй байгаа улмаас хүүхдээ гэрээрээ|=харж, ажил хөдөлмөр эрхэлж чадахгүй байгаа эцэг эх нилээдгүй|байдаг.')}</Para>
      <Para $x={10} $gap={9}>Иймд тус "................................." цэцэрлэг нь:</Para>
      <OrgTable />
    </Sheet>
    <Sheet>
      <Heading $tone={BLUE}>{lines('=СУРГАЛТЫН АЖЛЫГ ЭХЛҮҮЛЭХ БОЛОН ЦААШИД БҮРЭН ХҮЧИН|ЧАДЛААРАА АЖИЛЛАХ ХҮРТЭЛХ ХҮҮХДИЙН ТООНЫ ТӨЛӨВ')}</Heading>
      <Para $gap={6}>{lines('=Тухайн дүүрэг, хороо /аймаг, сум/-ын ....... хүртэл насны сургуулийн|=өмнөх боловсролд хамрагдаагүй хүүхдүүдийн судалгааг нарийвчлан|гаргана. Үүнд тулгуурлан бүлгийн зохион \u00a0байгуулалтыг \u00a0хийнэ.')}</Para>
      <Heading $tone={BLUE} $gap={6}>ТӨСВИЙН ТӨСӨӨЛЛИЙГ ГУРВАН ЖИЛЭЭР ТООЦСОН &nbsp;СУДАЛГАА</Heading>
      <FinanceTable />
      <Heading $tone={BLUE} $gap={16}>СУРГАЛТЫН ТӨЛБӨРИЙН ХЭМЖЭЭ, ТОГТООСОН ҮНДЭСЛЭЛ</Heading>
    </Sheet>

    <Sheet>
      <TextTable x={-3} cols={[74, 74, 75]} center lh={8} rows={[{ h: 40, cells: ['Нэг хичээлийн жилд|зарцуулагдах нийт|зардал', 'Нэг хүүхдэд|хичээлийн жилд|зарцуулах зардлын', 'Нэг хүүхдэд сард|зарцуулах зардлын|хэмжээ'] }]} />
    </Sheet>
    <Sheet>
      <Heading $tone={NAVY} $center $gap={16}>СУРГАЛТЫН ТӨЛӨВЛӨГӨӨ, ХӨТӨЛБӨР</Heading>
    </Sheet>
    <Sheet>
      <TextTable x={-4} cols={[56, 42, 124]} lh={8} rows={[
        { h: 8, cells: ['', '', 'өмсөх, ороо хураах'] },
        { h: 40, cells: ['Чийрэгжүүлэлт,|ариун цэвэр', '15.00-15.30', '=Усан арчилт, нар агаараар|=чийрэгжүүлэх, гар нүүр угаах, шүд'] },
      ]} />
    </Sheet>
    <Sheet>
      <TextTable x={-2} cols={[15, 48, 37, 36, 40, 46]} lh={8} rows={[{ h: 15, cells: ['', 'үргэлжлэх|хугацаа', '', '', '', ''] }]} />
    </Sheet>
  </PageGrid>
);

const StatusBar = () => (
  <Status>
    <span>Page 13 of 185</span><span>25467 words</span><span>Mongolian (Mongolia)</span>
    <ViewModes>
      <ViewMode aria-label="Read mode">
        <Svg w={14} h={14}><path d="M7 2.500L5 1.500H.5v10H5l2 1 2-1h4.500v-10H9zM7 2v11M2 4.500h3M2 6.500h3M2 8.500h3M9 4.500h3M9 6.500h3M9 8.500h3" stroke={G} /></Svg>
      </ViewMode>
      <ViewMode $on aria-label="Print layout">
        <Svg w={14} h={14}><path d="M.5.5h13v13H.5zM3 3.500h8M3 5.500h8M3 7.500h8M3 9.500h8M3 11.500h8" stroke="#555" /></Svg>
      </ViewMode>
      <ViewMode aria-label="Web layout">
        <Svg w={14} h={14}><path d="M6 12.500H.5V.5h11V6M3 3.500h6M3 5.500h6M3 7.500h3" stroke={G} /><circle cx="10" cy="10" r="3.500" stroke={G} /><path d="M8 9l3 2v2" stroke={G} strokeWidth="2" /></Svg>
      </ViewMode>
    </ViewModes>
    <button aria-label="Zoom out"><Svg w={15} h={9}><path d="M6 4.500h8" stroke="#444" /></Svg></button>
    <ZoomSlider type="range" aria-label="Zoom" min={0} max={100} defaultValue={16} />
    <button aria-label="Zoom in"><Svg w={9} h={9}><path d="M0 4.500h8M4.500 1v8" stroke="#444" /></Svg></button>
    <ZoomValue>40%</ZoomValue>
  </Status>
);

export default function App() {
  return (
    <Shell>
      <Global />
      <Header />
      <RibbonBar />
      <Workspace>
        <Desk><Pages /></Desk>
        <ScrollTrack>
          <ScrollButton aria-label="Scroll up"><Svg w={7} h={4}><path d="M0 4h7L3.500 0z" fill="#666" /></Svg></ScrollButton>
          <ScrollThumb />
          <ScrollButton $push aria-label="Scroll down"><Svg w={7} h={4}><path d="M0 0h7L3.500 4z" fill="#666" /></Svg></ScrollButton>
        </ScrollTrack>
      </Workspace>
      <StatusBar />
    </Shell>
  );
}
